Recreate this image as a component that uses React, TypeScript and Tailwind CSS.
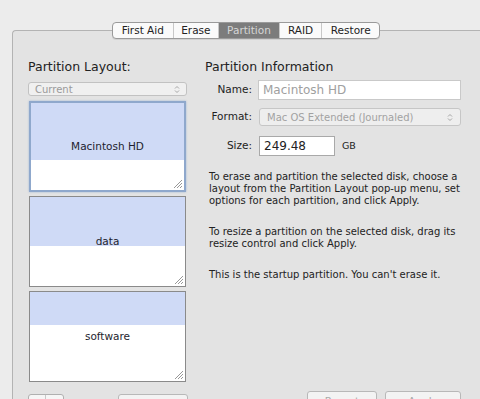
import React from 'react';

const tabs = ['First Aid', 'Erase', 'Partition', 'RAID', 'Restore'];

const parts = [
    { name: 'Macintosh HD', used: 59, selected: true },
    { name: 'data', used: 50, selected: false },
    { name: 'software', used: 34, selected: false },
];

function Grip() {
    return (
        <svg className="absolute right-[1px] bottom-[1px]" width="10" height="10" viewBox="0 0 10 10">
            <path d="M9 1 L1 9 M9 4 L4 9 M9 7 L7 9" stroke="#8c8c8c" strokeWidth="0.9" />
        </svg>
    );
}

function Stepper() {
    return (
        <svg width="6" height="9" viewBox="0 0 6 9" className="opacity-60">
            <path d="M1 3.5 L3 1.5 L5 3.5 M1 5.5 L3 7.5 L5 5.5" stroke="#777" fill="none" strokeWidth="1" />
        </svg>
    );
}

export default function App() {
    return (
        <div
            className="w-[480px] h-[399px] overflow-hidden bg-[#ececec] pt-[30px] pl-[12px] text-[#222]"
            style={{ fontFamily: '"DejaVu Sans", "Liberation Sans", sans-serif' }}
        >
            <div className="w-[500px] h-[400px] border-l border-t border-[#b3b3b3] rounded-tl-[4px] bg-[#e3e3e3]">
                {/* tab strip */}
                <div className="-mt-[9px] ml-[99px] flex h-[17px] w-[268px] rounded-[4px] border border-[#9a9a9a] bg-[#fafafa] text-[10.5px] shadow-[0_1px_0_rgba(0,0,0,0.08)] overflow-hidden">
                    {tabs.map((t, i) => (
                        <div
                            key={t}
                            className={`flex items-center justify-center leading-none ${i > 0 ? 'border-l border-[#c8c8c8]' : ''} ${t === 'Partition' ? 'bg-[#7c7c7c] text-[#d6d6d6]' : 'text-[#222]'} ${['w-[60px]', 'w-[46px]', 'w-[61px]', 'w-[43px]', 'w-[58px]'][i]}`}
                        >
                            {t}
                        </div>
                    ))}
                </div>

                <div className="flex pl-[15px] pt-[20px]">
                    {/* left column */}
                    <div className="w-[160px]">
                        <div className="text-[12.5px] leading-[16px] h-[16px]">Partition Layout:</div>
                        <div className="mt-[7px] h-[14px] w-[159px] rounded-[3px] border border-[#c2c2c2] bg-[#f0f0f0] flex items-center justify-between pl-[6px] pr-[6px] text-[10px] text-[#9a9a9a]">
                            <span>Current</span>
                            <Stepper />
                        </div>
                        <div className="mt-[5px] ml-[1px] flex flex-col gap-[4px] w-[157px]">
                            {parts.map((p) => (
                                <div
                                    key={p.name}
                                    className={`relative h-[91px] bg-white ${p.selected ? 'border-2 border-[#8fa8cc] shadow-[0_0_2px_#9fb6d6]' : 'border border-[#8a8a8a]'}`}
                                >
                                    <div className="bg-[#cfdaf6]" style={{ height: p.used - (p.selected ? 2 : 1) }} />
                                    <div className="absolute inset-0 flex items-center justify-center text-[10.5px] text-[#1e1e2e]">
                                        {p.name}
                                    </div>
                                    <Grip />
                                </div>
                            ))}
                        </div>
                        <div className="mt-[12px] flex items-start">
                            <div className="flex h-[20px] w-[36px] rounded-[3px] border border-[#b0b0b0] bg-[#f6f6f6] text-[11px] leading-[18px]">
                                <div className="w-[18px] text-center border-r border-[#c8c8c8]">+</div>
                                <div className="w-[18px] text-center text-[#aaa]">−</div>
                            </div>
                            <div className="ml-[54px] h-[20px] w-[73px] rounded-[3px] border border-[#b8b8b8] bg-[#f3f3f3] text-center text-[10.5px] leading-[18px] text-[#aaa]">
                                Options…
                            </div>
                        </div>
                    </div>

                    {/* right column */}
                    <div className="ml-[17px] w-[256px]">
                        <div className="text-[12.5px] leading-[16px] h-[16px]">Partition Information</div>
                        <div className="mt-[5px] flex items-center h-[20px]">
                            <div className="w-[47px] text-right text-[10.5px]">Name:</div>
                            <div className="ml-[6px] h-[20px] w-[203px] border border-[#c9c9c9] bg-white pl-[4px] flex items-center text-[12px] text-[#a0a0a0]">
                                Macintosh HD
                            </div>
                        </div>
                        <div className="mt-[8px] flex items-center h-[18px]">
                            <div className="w-[47px] text-right text-[10.5px]">Format:</div>
                            <div className="ml-[7px] h-[18px] w-[202px] rounded-[3px] border border-[#c6c6c6] bg-[#eeeeee] flex items-center justify-between pl-[7px] pr-[7px] text-[10px] text-[#a2a2a2]">
                                <span>Mac OS Extended (Journaled)</span>
                                <Stepper />
                            </div>
                        </div>
                        <div className="mt-[10px] flex items-center h-[20px]">
                            <div className="w-[47px] text-right text-[10.5px]">Size:</div>
                            <div className="ml-[7px] h-[20px] w-[76px] border border-[#a9a9a9] bg-white pl-[4px] flex items-center text-[12px]">
                                249.48
                            </div>
                            <div className="ml-[7px] text-[9.5px]">GB</div>
                        </div>

                        <div className="mt-[15px] pl-[4px] text-[10px] leading-[12px] text-[#222]">
                            <p>
                                To erase and partition the selected disk, choose a layout from the Partition Layout pop-up menu, set options for each partition, and click Apply.
                            </p>
                            <p className="mt-[19px]">
                                To resize a partition on the selected disk, drag its resize control and click Apply.
                            </p>
                            <p className="mt-[19px]">This is the startup partition. You can't erase it.</p>
                        </div>

                        <div className="mt-[110px] flex">
                            <div className="ml-[102px] h-[20px] w-[71px] rounded-[3px] border border-[#b8b8b8] bg-[#f3f3f3] text-center text-[10.5px] leading-[18px] text-[#aaa]">
                                Revert
                            </div>
                            <div className="ml-[8px] h-[20px] w-[77px] rounded-[3px] border border-[#b8b8b8] bg-[#f3f3f3] text-center text-[10.5px] leading-[18px] text-[#aaa]">
                                Apply
                            </div>
                        </div>
                    </div>
                </div>
            </div>
        </div>
    );
}
